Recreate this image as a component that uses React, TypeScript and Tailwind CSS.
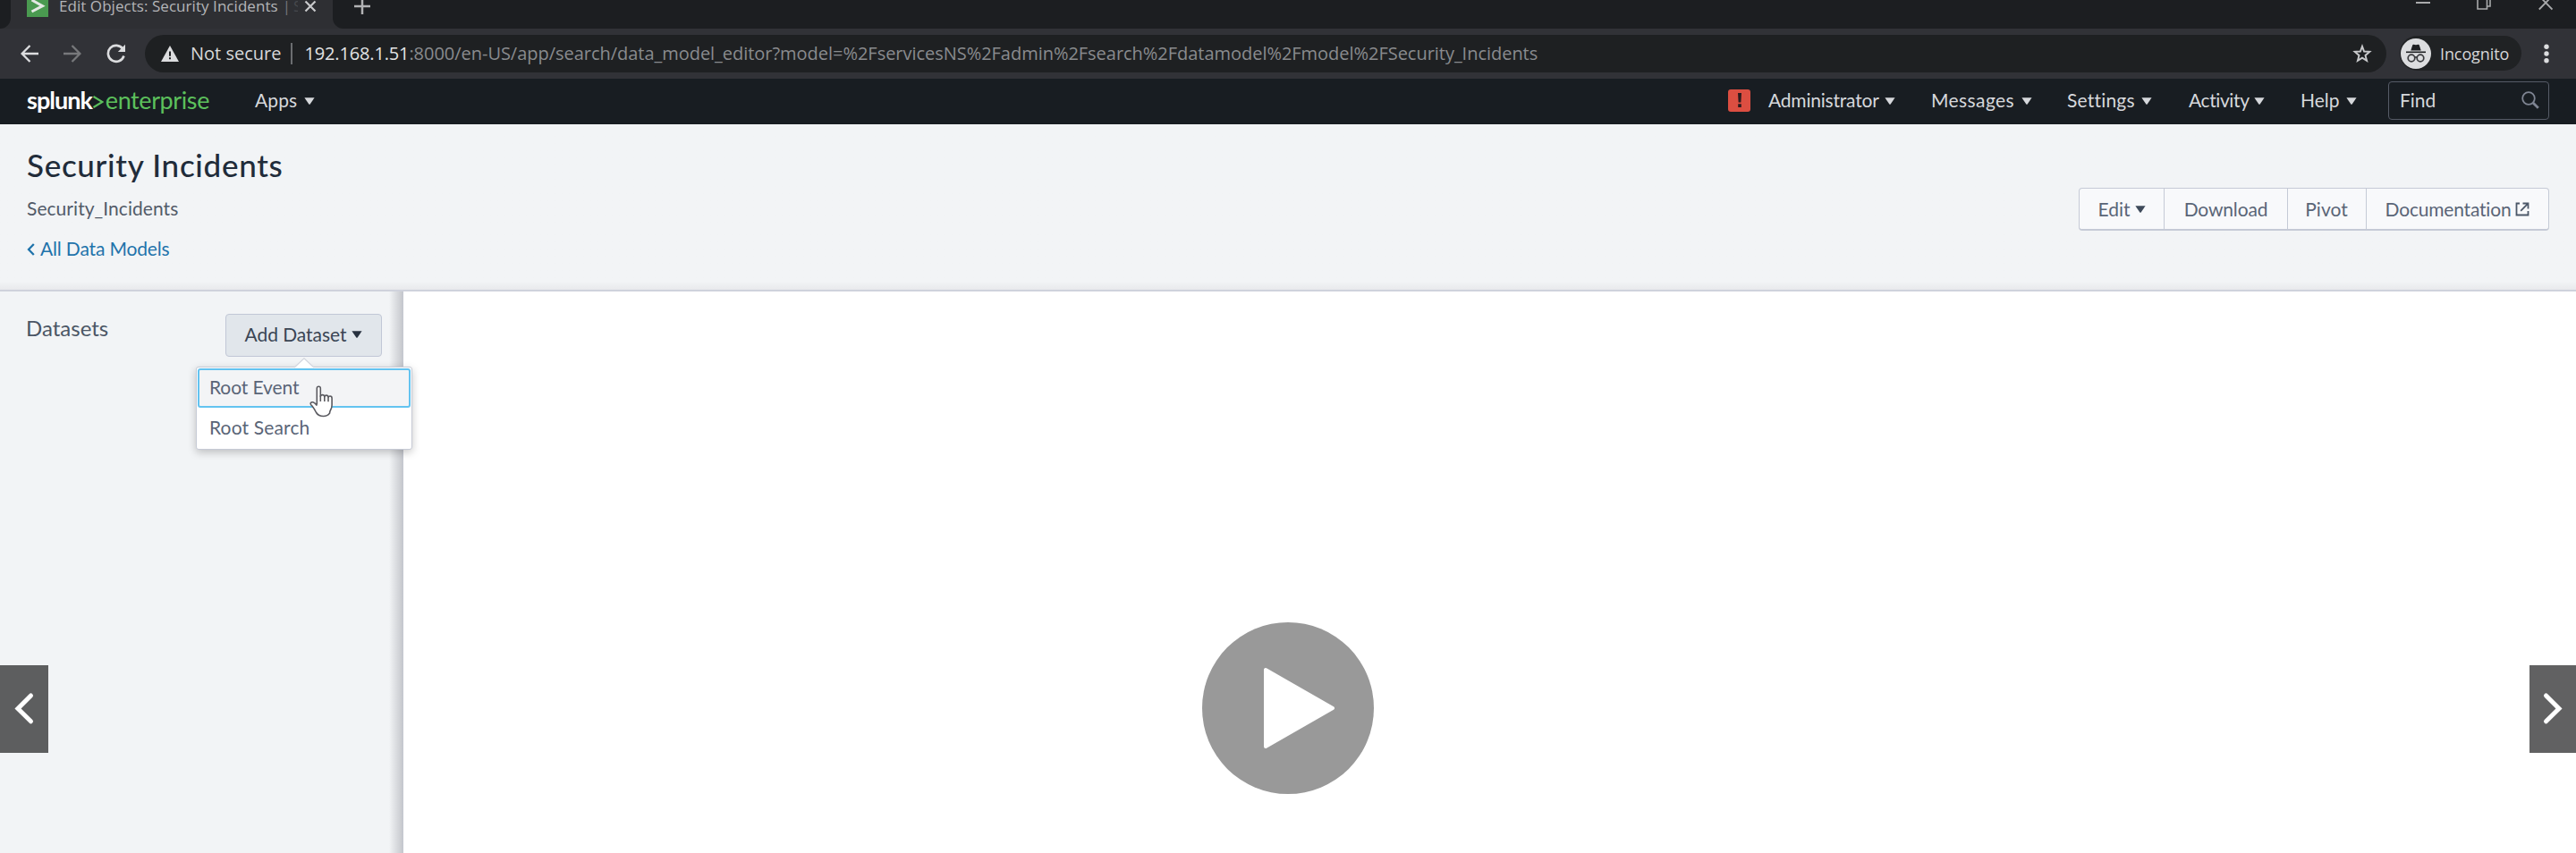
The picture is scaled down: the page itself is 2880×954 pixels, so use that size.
import type { ReactNode } from 'react';

function Caret({ className = '' }: { className?: string }) {
  return (
    <svg viewBox="0 0 12 8" className={`h-2 w-3 shrink-0 fill-current ${className}`}>
      <path d="M.4.3h11.200L6.500 7.700h-1Z" />
    </svg>
  );
}

function TabStrip() {
  return (
    <div className="flex h-8 bg-[#2e2f33]">
      <div className="h-8 w-3 shrink-0 rounded-br-[12px] bg-[#1c1e21]" />
      <div className="flex h-8 w-[360px] shrink-0 items-start overflow-hidden">
        <svg viewBox="0 0 24 24" className="-mt-[5px] ml-[18px] h-6 w-6 shrink-0">
          <rect width="24" height="24" fill="#4a9a50" />
          <path d="M5.5 5 17.5 11.7 5.5 18" fill="none" stroke="#e4e9e4" strokeWidth="3" />
        </svg>
        <div className="-mt-[5px] ml-[12px] flex h-6 w-[267px] shrink-0 items-center overflow-hidden whitespace-nowrap text-[17px] leading-6 text-[#b4b5b8]">
          <span className="tracking-[0.05px]">Edit Objects: Security Incidents</span>
          <span className="ml-[5px] text-[#74767c]">|</span>
          <span className="ml-[3px] text-[#46484c]">S</span>
        </div>
        <svg viewBox="0 0 14 14" className="ml-[7px] h-[14px] w-[14px] shrink-0" fill="none" stroke="#c9cacc" strokeWidth="2.2">
          <path d="m1.500 1.500 11 11m0-11-11 11" />
        </svg>
      </div>
      <div className="flex h-8 grow items-start rounded-bl-[12px] bg-[#1c1e21]">
        <svg viewBox="0 0 18 18" className="-mt-[2px] ml-[24px] h-[18px] w-[18px]" fill="none" stroke="#b2b3b5" strokeWidth="2.500">
          <path d="M9 0v18M0 9h18" />
        </svg>
        <div className="ml-auto mr-[26px] flex items-start text-[#a9aaac]">
          <svg viewBox="0 0 16 12" className="mr-[52px] h-3 w-4" fill="none" stroke="currentColor" strokeWidth="2">
            <path d="M0 3h16" />
          </svg>
          <svg viewBox="0 0 16 12" className="mr-[53px] h-3 w-4" fill="none" stroke="currentColor" strokeWidth="1.600">
            <path d="M1-2.500h10.500V10H1ZM4-4h11V7h-3" />
          </svg>
          <svg viewBox="0 0 16 12" className="h-3 w-4" fill="none" stroke="currentColor" strokeWidth="1.800">
            <path d="M.8-4.500 15.500 10.500M15.500-4.500.8 10.500" />
          </svg>
        </div>
      </div>
    </div>
  );
}

function Toolbar() {
  return (
    <div className="flex h-14 items-center bg-[#313237] pb-[1px]">
      <svg viewBox="0 0 20 20" className="ml-[23px] h-5 w-5 shrink-0" fill="none" stroke="#dcdddf" strokeWidth="2.300">
        <path d="M20 10H2M10.500 1 1.600 10l8.900 9" />
      </svg>
      <svg viewBox="0 0 20 20" className="ml-[28px] h-5 w-5 shrink-0" fill="none" stroke="#77787b" strokeWidth="2.300">
        <path d="M0 10h18M9.500 1l8.900 9-8.900 9" />
      </svg>
      <svg viewBox="0 0 22 22" className="ml-[28px] h-[22px] w-[22px] shrink-0" fill="none">
        <path d="M18.300 5.700A9 9 0 1 0 19.500 13.500" stroke="#dcdddf" strokeWidth="2.600" />
        <path d="M21 .8V9h-8.200Z" fill="#dcdddf" />
      </svg>
      <div className="ml-[21px] flex h-[42px] grow items-center rounded-full bg-[#1e2022] pl-[18px] pr-[16px] text-[20px] leading-6 whitespace-nowrap">
        <svg viewBox="0 0 20 18" className="h-[18px] w-5 shrink-0">
          <path d="M10 0 20 18H0Z" fill="#dcdddf" />
          <path d="M9 6.500h2v5.200H9Zm0 6.700h2v2.100H9Z" fill="#1e2022" />
        </svg>
        <span className="ml-[13px] w-[101px] text-[#d8d9da]">Not secure</span>
        <span className="ml-[11px] h-6 w-[1.500px] bg-[#6b6d70]" />
        <span className="ml-[14px] tracking-[-0.15px] text-[#e3e4e5]">192.168.1.51</span>
        <span className="tracking-[-0.03px] text-[#898b8e]">
          :8000/en-US/app/search/data_model_editor?model=%2FservicesNS%2Fadmin%2Fsearch%2Fdatamodel%2Fmodel%2FSecurity_Incidents
        </span>
        <svg viewBox="0 0 22 22" className="ml-auto h-[22px] w-[22px] shrink-0" fill="none" stroke="#c9cacc" strokeWidth="1.900">
          <path d="m11 2.800 2.100 5.700 6.200.4-4.800 4 1.600 6L11 15.600l-5.100 3.300 1.600-6-4.800-4 6.200-.4Z" />
        </svg>
      </div>
      <div className="ml-[15px] flex h-[39px] w-[136px] shrink-0 items-center rounded-full bg-[#202224]">
        <svg viewBox="0 0 34 34" className="ml-[1px] h-[34px] w-[34px] shrink-0">
          <circle cx="17" cy="17" r="17" fill="#dcdddf" />
          <path d="M11.300 13.600 13.200 7.400q.3-.9 1.200-.7l2.600.6 2.600-.6q.9-.2 1.200.7l1.900 6.200Z" fill="#1e2022" />
          <path d="M6 15.300h22" stroke="#1e2022" strokeWidth="1.600" />
          <g fill="none" stroke="#3a3b3e" strokeWidth="1.700">
            <circle cx="12" cy="22" r="3.800" />
            <circle cx="22" cy="22" r="3.800" />
            <path d="M15.600 21.200q1.400-.9 2.800 0" />
          </g>
        </svg>
        <span className="ml-[10px] text-[18px] leading-6 tracking-[-0.1px] text-[#d5d6d8]">Incognito</span>
      </div>
      <svg viewBox="0 0 6 22" className="ml-[25px] mr-[30px] h-[22px] w-[6px] shrink-0" fill="#dcdddf">
        <circle cx="3" cy="3.300" r="2.700" />
        <circle cx="3" cy="11" r="2.700" />
        <circle cx="3" cy="18.700" r="2.700" />
      </svg>
    </div>
  );
}

function NavItem({ label, className }: { label: string; className: string }) {
  return (
    <div className={`flex shrink-0 items-center justify-between ${className}`}>
      <span>{label}</span>
      <Caret className="mt-[1px]" />
    </div>
  );
}

function SplunkBar() {
  return (
    <div className="flex h-[51px] items-center bg-[#181d22] pb-[3px] text-[21px] leading-6 whitespace-nowrap text-[#d6d8dc]">
      <div className="ml-[30px] flex w-[204px] shrink-0 items-center text-[27px] leading-8">
        <span className="w-[74px] font-bold tracking-[-0.95px] text-white">splunk</span>
        <svg viewBox="0 0 12 16" className="mt-[4px] h-4 w-3" fill="none" stroke="#5cc05c" strokeWidth="2.200">
          <path d="M.5 2 10.500 8 .5 14" />
        </svg>
        <span className="ml-[2px] tracking-[-0.4px] text-[#5cc05c]">enterprise</span>
      </div>
      <NavItem label="Apps" className="ml-[51px] w-[67px] tracking-[0.1px]" />
      <div className="ml-auto flex h-[25px] w-[25px] shrink-0 items-center justify-center rounded-[3px] bg-[#dc4e41]">
        <svg viewBox="0 0 6 16" className="h-4 w-1.5" fill="#2b1b1e">
          <path d="M1 0h4l-.6 10.500H1.600ZM1.200 12.300h3.600V16H1.200Z" />
        </svg>
      </div>
      <NavItem label="Administrator" className="ml-[20px] w-[142px] tracking-[-0.2px]" />
      <NavItem label="Messages" className="ml-[40px] w-[113px] tracking-[0.4px]" />
      <NavItem label="Settings" className="ml-[39px] w-[95px] tracking-[0.2px]" />
      <NavItem label="Activity" className="ml-[41px] w-[85px] tracking-[-0.4px]" />
      <NavItem label="Help" className="ml-[40px] w-[63px] tracking-[0px]" />
      <div className="mt-[1px] mr-[30px] ml-[35px] flex h-[43px] w-[180px] shrink-0 items-center rounded-[4px] border-[1.500px] border-[#565b67] pr-[10px] pb-[1px] pl-[12px]">
        <span>Find</span>
        <svg viewBox="0 0 20 20" className="ml-auto h-5 w-5" fill="none" stroke="#7f8593">
          <circle cx="8" cy="8" r="6.800" strokeWidth="1.800" />
          <path d="m13 13 5.800 5.800" strokeWidth="2.800" />
        </svg>
      </div>
    </div>
  );
}

function GroupButton({ children, className }: { children: ReactNode; className: string }) {
  return <div className={`flex h-full shrink-0 items-center justify-center ${className}`}>{children}</div>;
}

function PageHeader() {
  return (
    <div className="flex h-[187px] justify-between border-b-2 border-[#cfd2dc] bg-[#f2f4f6] bg-linear-to-b from-[#f2f4f6] from-95% to-[#e8e9ec] whitespace-nowrap">
      <div className="pl-[30px]">
        <h1 className="mt-[23px] text-[35px] leading-[44px] font-medium tracking-[0.7px] text-[#212c3a]">Security Incidents</h1>
        <p className="mt-[15px] text-[21px] leading-6 tracking-[0.05px] text-[#525b69]">Security_Incidents</p>
        <p className="mt-[21px] flex items-center text-[21px] leading-6 tracking-[-0.15px] text-[#1f73ab]">
          <svg viewBox="0 0 9 14" className="mt-[1px] mr-[6px] h-[14px] w-[9px]" fill="none" stroke="currentColor" strokeWidth="2.300">
            <path d="M7.800 1 2 7l5.800 6" />
          </svg>
          All Data Models
        </p>
      </div>
      <div className="mt-[71px] mr-[30px] flex h-12 w-[526px] divide-x-[1.500px] divide-[#c5cad6] rounded-[4px] border-[1.500px] border-b-2 border-[#c5cad6] bg-[#f8f9fb] text-[21px] leading-6 text-[#5a6577]">
        <GroupButton className="w-[95px] gap-[5px]">
          Edit <Caret className="text-[#3e4a5a]" />
        </GroupButton>
        <GroupButton className="w-[138px] tracking-[-0.15px]">Download</GroupButton>
        <GroupButton className="w-[88px] pr-[1px]">Pivot</GroupButton>
        <GroupButton className="grow gap-[5px] tracking-[-0.2px]">
          Documentation
          <svg viewBox="0 0 16 16" className="h-4 w-4" fill="none" stroke="#4c5869" strokeWidth="1.800">
            <path d="M5 1.500H1.500v13h13V10M8.500 1.500h6v6M14.300 1.700 6.200 9.800" />
          </svg>
        </GroupButton>
      </div>
    </div>
  );
}

function HandCursor() {
  return (
    <svg viewBox="0 0 27 36" className="absolute top-[20px] left-[126px] h-9 w-[27px]" fill="#fff" stroke="#5a5a60" strokeWidth="1.600" strokeLinejoin="round">
      <path d="M8.300 21.500V3.300q0-2.100 2-2.100t2 2.100v9q.3-1.700 2.200-1.700 2 0 2.300 2 .4-1.500 2.100-1.500 1.900 0 2.200 2.200.4-1.300 1.900-1.300 2.100 0 2.100 2.500v7.500q0 3-1.500 5.500-1 1.700-1 3.500-2.500 3.500-7 3.500-5.500 0-8-4-2-4.200-4.300-7.100Q.6 21 1.300 19.800q1.600-2 4.200-.2 1.600 1 2.800 3" />
      <path d="M12.300 11.500v6.500M16.800 12v6M21 13.300v5" fill="none" />
    </svg>
  );
}

function DatasetMenu() {
  return (
    <div className="absolute top-[59px] -left-[33px] z-10 h-[93px] w-[242px] rounded-[3px] border-[1.500px] border-[#c6cad5] bg-white text-[21px] leading-6 text-[#5a6577] shadow-[0_3px_10px_rgba(0,0,0,0.22)]">
      <svg viewBox="0 0 22 12" className="absolute -top-[11px] left-[109px] h-3 w-[22px]">
        <path d="M0 11.500 11 .8 22 11.500Z" fill="#fff" />
        <path d="M0 11 11 .8 22 11" fill="none" stroke="#d3d6de" strokeWidth="1.200" />
      </svg>
      <div className="m-[1px] flex h-[44px] items-center rounded-[3px] border-[2.500px] border-[#63c3f0] bg-[#f3f4f6] pb-[3px] pl-[11px] tracking-[-0.1px]">Root Event</div>
      <div className="flex h-[44px] items-center pb-[2px] pl-[14px] tracking-[0.15px]">Root Search</div>
      <HandCursor />
    </div>
  );
}

function Sidebar() {
  return (
    <aside className="flex w-[451px] shrink-0 border-r border-[#c4c7d0] bg-[#f2f4f6]">
      <span className="mt-[27px] ml-[29px] text-[24px] leading-7 text-[#4b5665]">Datasets</span>
      <div className="relative mt-[25px] ml-auto h-12 w-[175px]">
        <div className="flex h-full items-center justify-center gap-[6px] rounded-[4px] border-[1.500px] border-[#c1c7d6] bg-[#e1e6eb] pb-[2px] text-[21px] leading-6 tracking-[-0.05px] whitespace-nowrap text-[#3a4554]">
          Add Dataset <Caret className="text-[#27313f]" />
        </div>
        <DatasetMenu />
      </div>
      <div className="ml-[8px] w-[15px] bg-linear-to-r from-[#f2f4f6] to-[#c6c8cd]" />
    </aside>
  );
}

function SlideArrow({ side }: { side: 'left' | 'right' }) {
  const left = side === 'left';
  return (
    <button className={`absolute top-[744px] z-20 h-[98px] ${left ? 'left-0 w-[54px] bg-[#5d5e5f]' : 'right-0 w-[52px] bg-[#616162]'}`}>
      <svg viewBox="0 0 52 98" className="h-[98px] w-[52px]" fill="none" stroke="#fff" strokeWidth="5" strokeLinecap="round">
        <path d={left ? 'M34.500 34 20 48.500l14.500 14.300' : 'M18.500 34 33 48.500 18.500 62.800'} />
      </svg>
    </button>
  );
}

export default function App() {
  return (
    <div className="relative flex h-[954px] w-[2880px] flex-col overflow-hidden bg-white font-['Lato',sans-serif]">
      <div className="font-['Open_Sans',sans-serif]">
        <TabStrip />
        <Toolbar />
      </div>
      <SplunkBar />
      <PageHeader />
      <div className="flex grow">
        <Sidebar />
        <main className="grow bg-white" />
      </div>
      <button className="absolute top-[696px] left-[1344px] z-20 h-48 w-48">
        <svg viewBox="0 0 192 192" className="h-48 w-48">
          <circle cx="96" cy="96" r="96" fill="#999" />
          <path d="M71 53v86l75-43Z" fill="#fff" stroke="#fff" strokeWidth="4" strokeLinejoin="round" />
        </svg>
      </button>
      <SlideArrow side="left" />
      <SlideArrow side="right" />
    </div>
  );
}
